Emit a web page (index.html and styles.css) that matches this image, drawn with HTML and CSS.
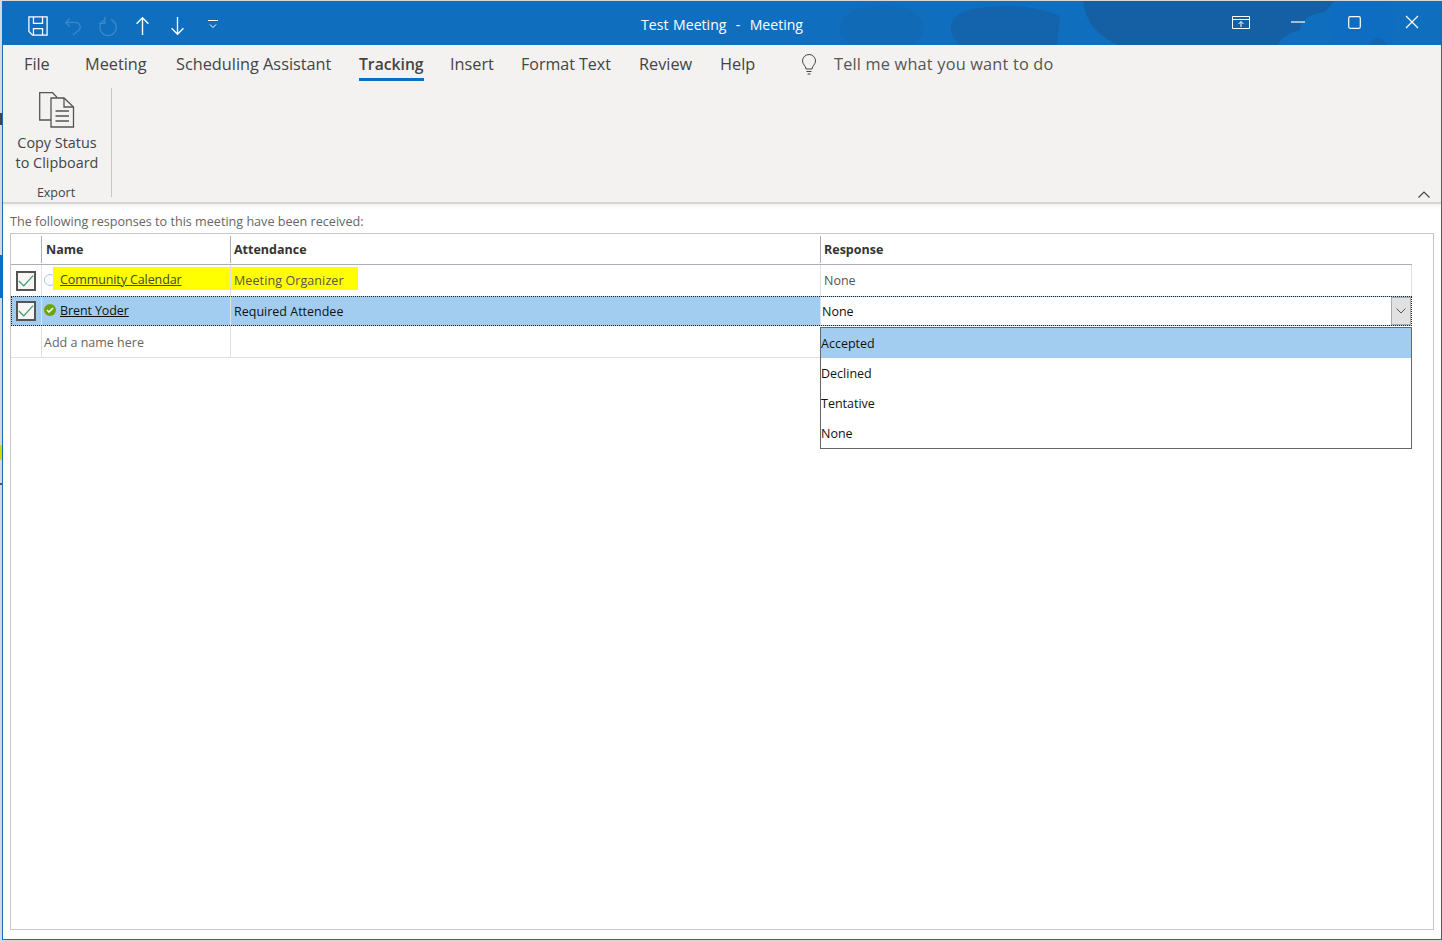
FILE: index.html
```html
<!DOCTYPE html>
<html lang="en">
<head>
<meta charset="utf-8">
<title>Test Meeting - Meeting</title>
<link rel="stylesheet" href="styles.css">
</head>
<body>
<div class="window">
  <header class="titlebar">
    <svg class="title-art" width="1438" height="44" viewBox="3 1 1438 44">
      <ellipse cx="882" cy="28" rx="42" ry="24" fill="#116ab6"/>
      <path d="M951 30c0-14 10-20 30-22 30-6 60 0 79 8l-3 29H960c-5-5-9-10-9-15z" fill="#1364ac"/>
      <path d="M1083 0c2 20 12 34 35 45h160c3-7 10-11 22-15 0-10 10-16 25-18l10-12z" fill="#1560a4"/>
      <circle cx="1362" cy="27" r="33" fill="#0e6dc1"/>
      <circle cx="1378" cy="47" r="9" fill="#1465ae"/>
    </svg>
    <div class="qat">
      <svg class="ico" width="20" height="20" viewBox="0 0 22 22" fill="none" stroke="#fff" stroke-width="1.400"><path d="M1 1h20v20H5l-4-4z"/><path d="M6 1v7h10V1M6 21v-7h10v7"/></svg>
      <svg class="ico" width="18" height="20" viewBox="0 0 20 22" fill="none" stroke="#3f88ca" stroke-width="1.400"><path d="M2 7h11a5 5 0 0 1 3 9l-6 5M6.500 2.500 2 7l4.500 4.500"/></svg>
      <svg class="ico" width="20" height="20" viewBox="0 0 22 22" fill="none" stroke="#3f88ca" stroke-width="1.400"><path d="M7 4.500a9 9 0 1 0 7-.5M7.500 1v7H1"/></svg>
      <svg class="ico" width="15" height="20" viewBox="0 0 16 22" fill="none" stroke="#fff" stroke-width="1.500"><path d="M8 21V2M1.500 8.500 8 2l6.500 6.500"/></svg>
      <svg class="ico" width="15" height="20" viewBox="0 0 16 22" fill="none" stroke="#fff" stroke-width="1.500"><path d="M8 1v19M1.500 13.500 8 20l6.500-6.500"/></svg>
      <svg class="ico" width="10" height="9" viewBox="0 0 10 9" fill="none" stroke="#fff" stroke-width="1"><path d="M0 .5h10M2 4.500l3 3 3-3"/></svg>
    </div>
    <div class="title">Test Meeting&nbsp; -&nbsp; Meeting</div>
    <div class="winctl">
      <svg class="ctl-display" width="18" height="13" viewBox="0 0 18 13" fill="none" stroke="#fff"><path d="M.5.500h17v12H.5zM.5 3.500h17M9 11V5.500M6.500 8 9 5.500 11.500 8" /></svg>
      <svg class="ctl-min" width="14" height="2" viewBox="0 0 14 2"><path d="M0 1h14" stroke="#fff" stroke-width="1.200"/></svg>
      <svg class="ctl-max" width="13" height="13" viewBox="0 0 13 13" fill="none"><rect x=".7" y=".7" width="11.600" height="11.600" rx="1.500" stroke="#fff" stroke-width="1.200"/></svg>
      <svg class="ctl-close" width="14" height="14" viewBox="0 0 14 14"><path d="M1 1l12 12M13 1 1 13" stroke="#fff" stroke-width="1.200"/></svg>
    </div>
  </header>

  <nav class="tabs">
    <span class="tab tab-file">File</span>
    <span class="tab tab-meeting">Meeting</span>
    <span class="tab tab-sched">Scheduling Assistant</span>
    <span class="tab tab-track">Tracking</span>
    <span class="tab tab-insert">Insert</span>
    <span class="tab tab-format">Format Text</span>
    <span class="tab tab-review">Review</span>
    <span class="tab tab-help">Help</span>
    <svg class="bulb" width="16" height="22" viewBox="0 0 16 22" fill="none" stroke="#444"><path d="M5 15c0-3-3.500-4.500-3.500-8a6.500 6.500 0 0 1 13 0c0 3.500-3.500 5-3.500 8zM5.500 17.500h5M6.500 20h3"/></svg>
    <span class="tell">Tell me what you want to do</span>
  </nav>

  <section class="ribbon">
    <div class="group">
      <div class="group-body">
        <svg width="36" height="36" viewBox="0 0 36 36" fill="none" stroke="#555" stroke-width="1.300"><path d="M12 28H.7V.700h12.800l4 4v3"/><path fill="#f3f2f1" d="M12 6h13l9.500 9v20H12z"/><path d="M25 6v9h9.500M16.500 19h13.500M16.500 24h13.500M16.500 29h13.500"/></svg>
        <div class="group-label">Copy Status<br>to Clipboard</div>
      </div>
      <div class="group-name">Export</div>
    </div>
    <svg class="collapse" width="12" height="7" viewBox="0 0 12 7" fill="none" stroke="#444" stroke-width="1.200"><path d="M.5 6.500 6 1l5.500 5.500"/></svg>
  </section>

  <main class="content">
    <p class="intro">The following responses to this meeting have been received:</p>
    <div class="panel">
      <div class="row head">
        <div class="cell c-check"></div>
        <div class="cell c-name">Name</div>
        <div class="cell c-att">Attendance</div>
        <div class="cell c-resp">Response</div>
      </div>
      <div class="row r1">
        <div class="cell c-check"><span class="check"><svg width="18" height="14" viewBox="0 0 18 14" fill="none" stroke="#3f9c6d" stroke-width="1.500"><path d="M1 7l5.500 5.500L17 1"/></svg></span></div>
        <div class="cell c-name"><span class="dot-empty"></span><span class="hl-name"><a>Community Calendar</a></span></div>
        <div class="cell c-att"><span class="hl-att">Meeting Organizer</span></div>
        <div class="cell c-resp">None</div>
      </div>
      <div class="row r2">
        <div class="cell c-check"><span class="check"><svg width="18" height="14" viewBox="0 0 18 14" fill="none" stroke="#3f9c6d" stroke-width="1.500"><path d="M1 7l5.500 5.500L17 1"/></svg></span></div>
        <div class="cell c-name"><span class="dot-ok"><svg width="8" height="6" viewBox="0 0 8 6" fill="none" stroke="#fff" stroke-width="1.500"><path d="M1 3l2 2 4-4"/></svg></span><a>Brent Yoder</a></div>
        <div class="cell c-att">Required Attendee</div>
        <div class="cell c-edit"><span>None</span><span class="arrow"><svg width="10" height="6" viewBox="0 0 10 6" fill="none" stroke="#555"><path d="M.5.500 5 5 9.500.500"/></svg></span></div>
      </div>
      <div class="row r3">
        <div class="cell c-check"></div>
        <div class="cell c-name add">Add a name here</div>
        <div class="cell c-att"></div>
      </div>
      <ul class="dropdown">
        <li class="sel">Accepted</li>
        <li>Declined</li>
        <li>Tentative</li>
        <li>None</li>
      </ul>
    </div>
  </main>
</div>
</body>
</html>
```
FILE: styles.css
```css
* { box-sizing: border-box; }
html, body { margin: 0; padding: 0; overflow: hidden; }
html {
  background:
    linear-gradient(#d8d8d8 0 113px, #444 113px 125px, #d8d8d8 125px 255px, #106ebe 255px 298px, #d8d8d8 298px 445px, #d8d800 445px 460px, #d8d8d8 460px 483px, #555 483px 485px, #d8d8d8 485px) no-repeat left top / 2px 100%,
    #d8d8d8;
}
body { font-family: "Open Sans", "Noto Sans", "Liberation Sans", sans-serif; color: #444; }

.window {
  width: 1440px;
  height: 939px;
  margin: 1px 0 0 2px;
  display: flex;
  flex-direction: column;
  background: #fff;
  border-left: 1px solid #106ebe;
  border-right: 1px solid #106ebe;
  border-bottom: 1px solid #106ebe;
}

/* title bar */
.titlebar {
  position: relative;
  height: 44px;
  flex: none;
  background: #106ebe;
  display: flex;
  align-items: center;
  color: #fff;
}
.title-art { position: absolute; left: 0; top: 0; }
.qat { position: relative; display: flex; align-items: center; padding-left: 25px; padding-top: 5px; height: 100%; }
.qat .ico:nth-child(2) { margin-left: 16px; }
.qat .ico:nth-child(3) { margin-left: 16px; }
.qat .ico:nth-child(4) { margin-left: 17px; }
.qat .ico:nth-child(5) { margin-left: 20px; }
.qat .ico:nth-child(6) { margin-left: 23px; margin-top: -3px; }
.title {
  position: absolute;
  left: 638px;
  top: 14px;
  font-size: 14.100px;
  word-spacing: 1px;
  line-height: 20px;
  white-space: nowrap;
}
.winctl { position: relative; margin-left: auto; display: flex; align-items: center; padding-right: 22px; margin-top: -2px; }
.ctl-min { margin-left: 41px; }
.ctl-max { margin-left: 43px; }
.ctl-close { margin-left: 44px; }

/* tabs */
.tabs {
  flex: none;
  height: 40px;
  background: #f3f2f1;
  display: flex;
  align-items: flex-start;
  font-size: 16.300px;
  line-height: 22px;
  padding-top: 8px;
  padding-left: 21px;
  color: #444;
  white-space: nowrap;
}
.tab { display: block; padding-bottom: 3px; }
.tab-file { width: 61px; }
.tab-meeting { width: 91px; }
.tab-sched { width: 183px; }
.tab-track { width: 65px; font-size: 15.700px; font-weight: 600; border-bottom: 3px solid #106ebe; height: 28px; }
.tab-insert { margin-left: 26px; width: 71px; }
.tab-format { width: 118px; font-size: 16px; }
.tab-review { width: 81px; }
.tab-help { width: 81px; }
.bulb { margin-top: 1px; margin-right: 17px; flex: none; }
.tell { letter-spacing: .2px; color: #555; }

/* ribbon */
.ribbon {
  position: relative;
  flex: none;
  height: 119px;
  background: #f3f2f1;
  border-bottom: 2px solid #d4d4d4;
  padding-top: 3px;
}
.group {
  width: 109px;
  height: 109px;
  border-right: 1px solid #c8c6c4;
  display: flex;
  flex-direction: column;
  align-items: center;
}
.group-body { display: flex; flex-direction: column; align-items: center; flex: 1; padding-top: 4px; }
.group-label { font-size: 14.400px; line-height: 20px; text-align: center; margin-top: 5px; white-space: nowrap; }
.group-name { font-size: 12.500px; line-height: 16px; margin: 0 2px -4px 0; }
.collapse { position: absolute; right: 11px; top: 106px; }

/* content */
.content {
  flex: 1;
  min-height: 0;
  padding: 9px 7px 9px 7px;
  display: flex;
  flex-direction: column;
  background: linear-gradient(#f4f4f4, #fff 6px);
}
.intro {
  margin: 0 0 2px;
  font-size: 12.600px;
  line-height: 18px;
  color: #666;
  flex: none;
}
.panel {
  position: relative;
  flex: 1;
  border: 1px solid #c6c6c6;
  padding-right: 21px;
  font-size: 12.500px;
}

.row { display: grid; grid-template-columns: 30px 189px 590px 1fr; align-items: stretch; }
.cell { display: flex; align-items: center; white-space: nowrap; }
.row > .cell + .cell { border-left: 1px solid #e1e1e1; }

.head { height: 31px; border-bottom: 1px solid #a9afb5; color: #333; font-weight: 700; }
.head .cell { height: 27px; margin-top: 2px; padding-left: 3px; }
.head .cell.c-name { padding-left: 4px; }
.head .cell.c-check { padding: 0; }
.row.head > .cell + .cell { border-left: 1px solid #a9afb5; }

.r1 { height: 31px; border-right: 1px solid #e1e1e1; }
.r1 .c-name { padding-left: 2px; }
.r1 .c-att { padding-left: 0; align-items: flex-start; }
.r1 .c-resp { padding-left: 3px; color: #555; }

.check {
  width: 20px;
  height: 20px;
  margin-left: 5px;
  border: 2px solid #555;
  background: #f6f6f6;
  display: flex;
  align-items: center;
  justify-content: center;
}
.check svg { width: 16px; }
.dot-empty { width: 12px; height: 12px; border: 1px solid #a9c8de; border-radius: 50%; flex: none; margin-top: -2px; }
.hl-name { flex: 1; align-self: flex-start; margin-top: 2px; margin-left: -3px; height: 23px; padding: 1px 0 0 7px; background: #ff0; display: flex; align-items: center; }
.hl-name a { letter-spacing: -.1px; }
a { color: #222; text-decoration: underline; }
.r1 a { color: #444; }
.hl-att { background: #ff0; height: 23px; margin-top: 2px; width: 127px; padding-left: 3px; line-height: 28px; color: #555; letter-spacing: .1px; }

.r2 {
  height: 30px;
  background: #a3cdf0;
  color: #111;
  outline: 1px dotted #222;
  outline-offset: -1px;
}
.r2 .c-name { padding-left: 2px; }
.r2 .c-att { padding-left: 3px; }
.dot-ok { width: 12px; height: 12px; border-radius: 50%; background: #6aa50a; flex: none; margin-right: 4px; margin-top: -2px; display: flex; align-items: center; justify-content: center; }
.dot-ok svg { width: 8px; }
.r2 a { color: #111; margin-top: -1px; letter-spacing: -.1px; }
.c-edit { background: #fff; padding-left: 1px; justify-content: space-between; padding-right: 1px; margin: 1px 0; }
.arrow {
  width: 20px;
  height: 28px;
  background: #e1e1e1;
  border: 1px solid #aaa;
  display: flex;
  align-items: center;
  justify-content: center;
}

.r3 { height: 32px; border-bottom: 1px solid #e1e1e1; }
.r3 .add { padding: 1px 0 0 2px; color: #666; }

.dropdown {
  position: absolute;
  left: 809px;
  top: 93px;
  width: 592px;
  height: 122px;
  margin: 0;
  padding: 0;
  list-style: none;
  background: #fff;
  border: 1px solid #666;
  color: #111;
}
.dropdown li { height: 30px; line-height: 31px; }
.dropdown li.sel { background: #a3cdf0; }
```
